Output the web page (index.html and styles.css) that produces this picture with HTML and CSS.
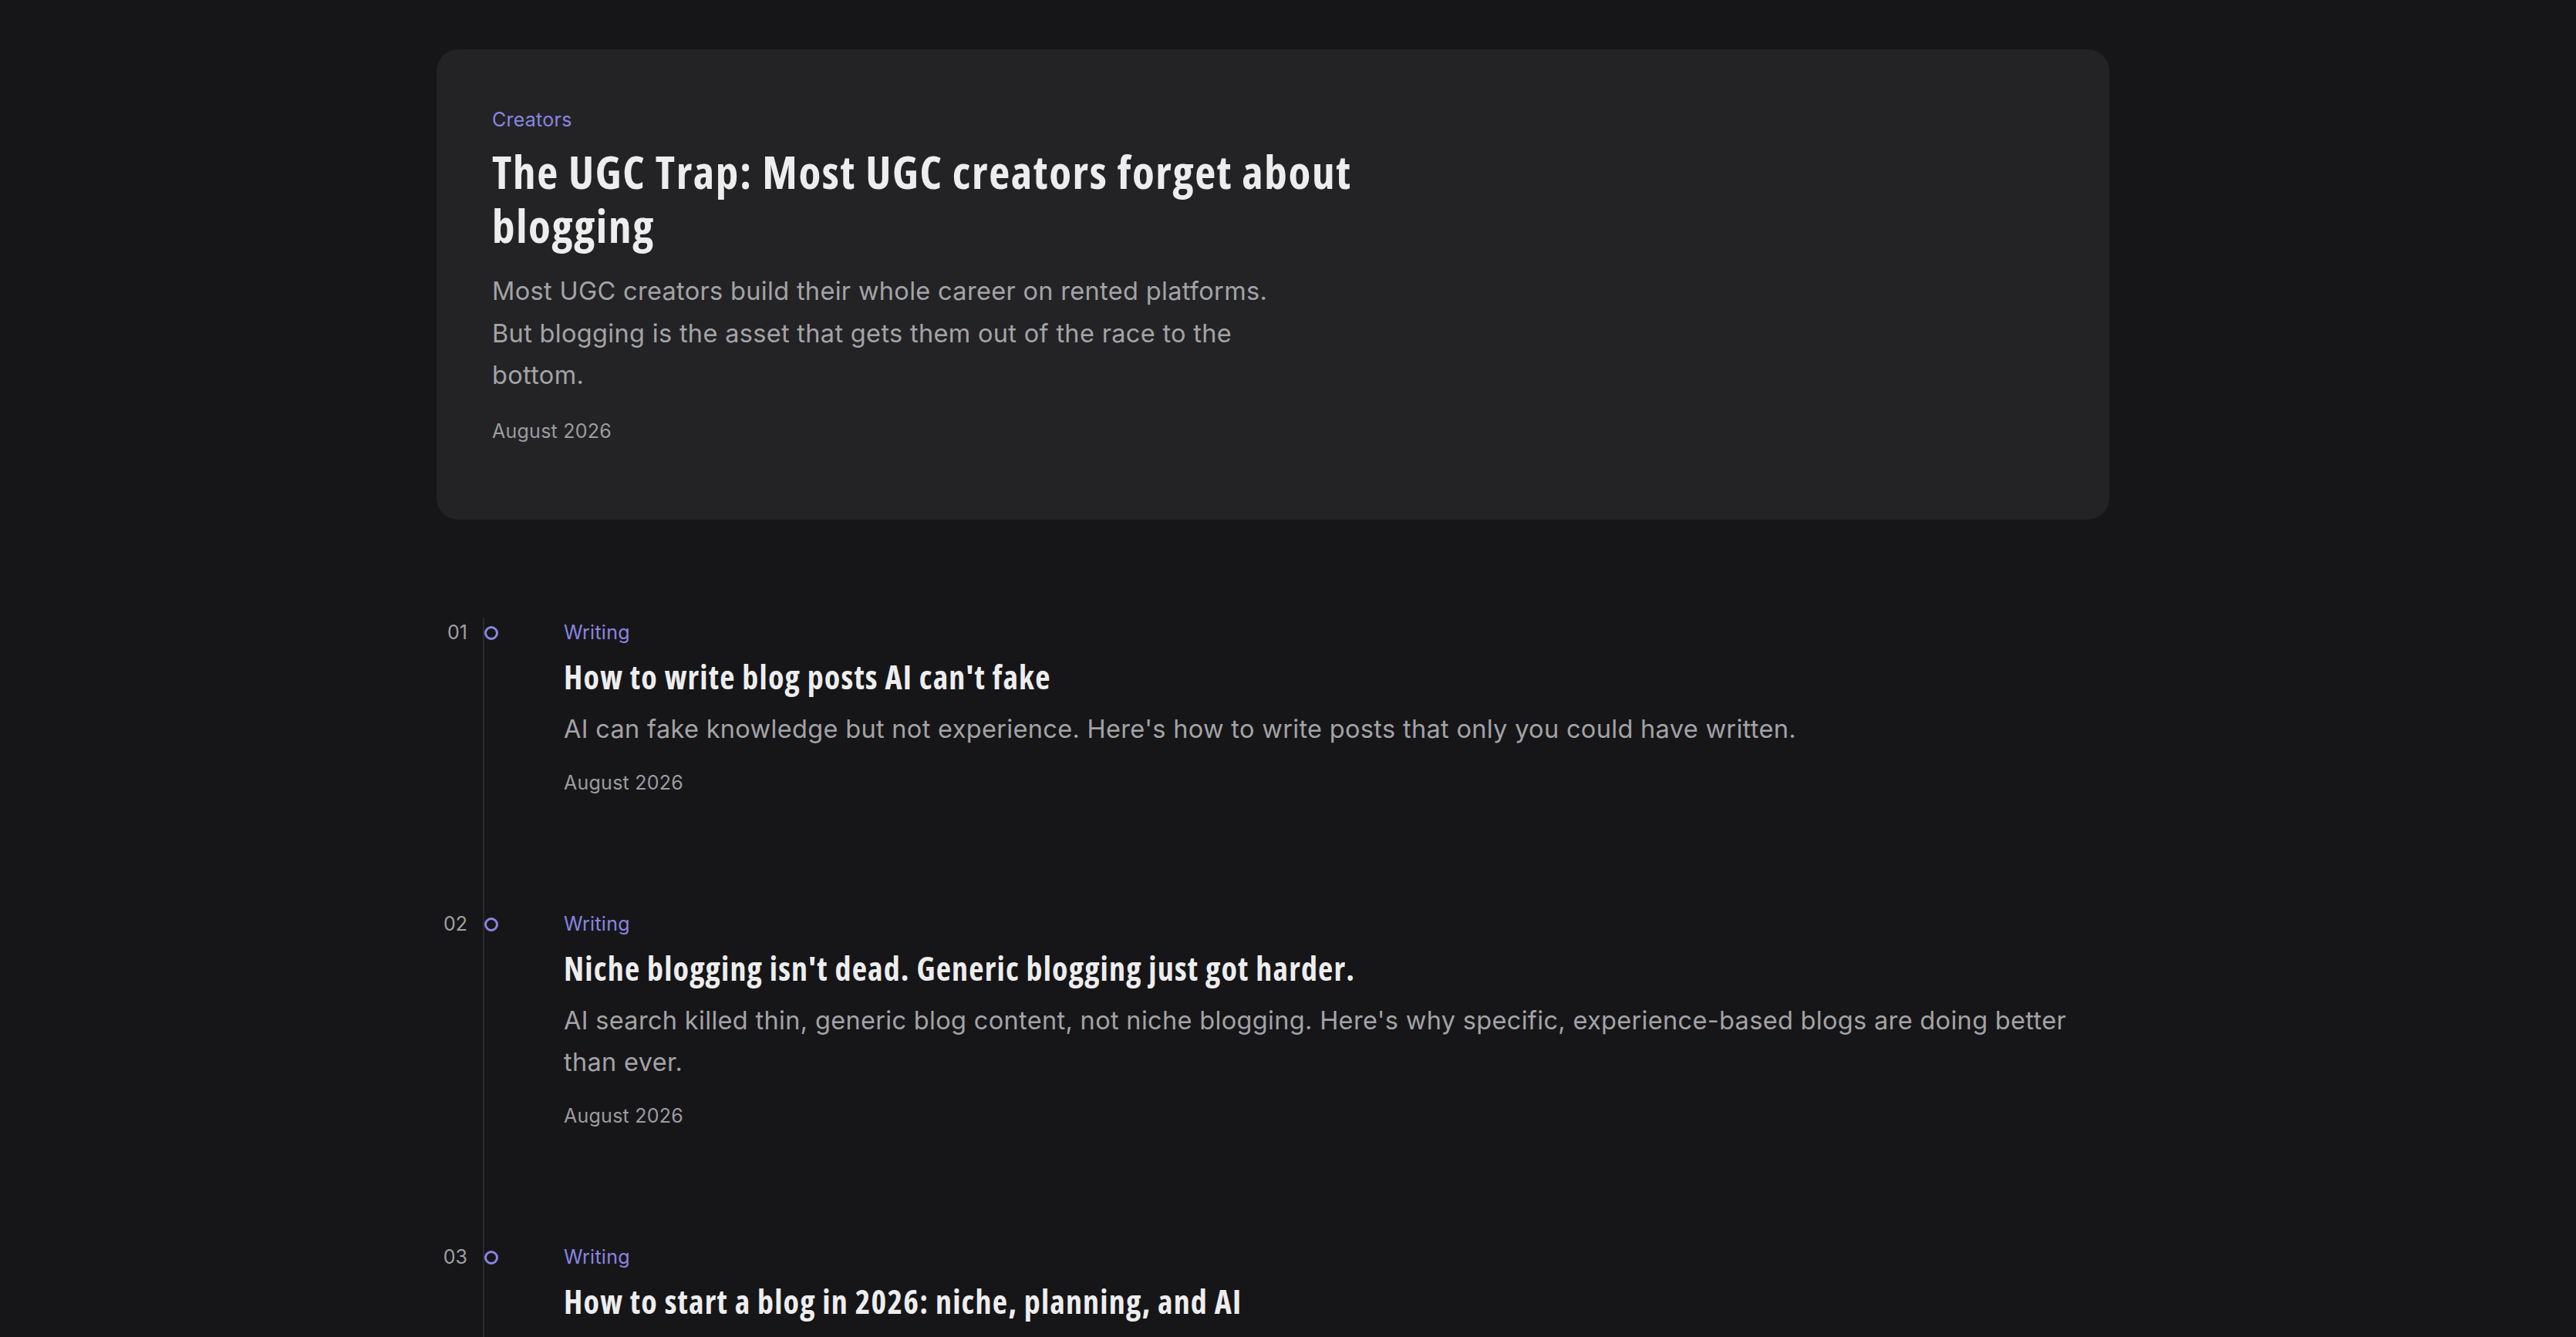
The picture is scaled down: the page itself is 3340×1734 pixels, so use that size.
FILE: index.html
```html
<!DOCTYPE html>
<html lang="en">
<head>
<meta charset="utf-8">
<title>Blog</title>
<link rel="stylesheet" href="styles.css">
</head>
<body>
<main class="page">
  <article class="feature">
    <div class="feature-tag">Creators</div>
    <h1 class="feature-title">The UGC Trap: Most UGC creators forget about blogging</h1>
    <p class="feature-excerpt">Most UGC creators build their whole career on rented platforms. But blogging is the asset that gets them out of the race to the bottom.</p>
    <div class="feature-date">August 2026</div>
  </article>

  <ol class="posts">
    <li class="post">
      <div class="post-num">01</div>
      <div class="post-rail"><span class="post-dot"></span></div>
      <div class="post-body">
        <div class="post-tag">Writing</div>
        <h2 class="post-title">How to write blog posts AI can't fake</h2>
        <p class="post-excerpt">AI can fake knowledge but not experience. Here's how to write posts that only you could have written.</p>
        <div class="post-date">August 2026</div>
      </div>
    </li>
    <li class="post">
      <div class="post-num">02</div>
      <div class="post-rail"><span class="post-dot"></span></div>
      <div class="post-body">
        <div class="post-tag">Writing</div>
        <h2 class="post-title">Niche blogging isn't dead. Generic blogging just got harder.</h2>
        <p class="post-excerpt">AI search killed thin, generic blog content, not niche blogging. Here's why specific, experience-based blogs are doing better than ever.</p>
        <div class="post-date">August 2026</div>
      </div>
    </li>
    <li class="post">
      <div class="post-num">03</div>
      <div class="post-rail"><span class="post-dot"></span></div>
      <div class="post-body">
        <div class="post-tag">Writing</div>
        <h2 class="post-title">How to start a blog in 2026: niche, planning, and AI</h2>
      </div>
    </li>
  </ol>
</main>
</body>
</html>
```

FILE: styles.css
```css
html, body {
  margin: 0;
  padding: 0;
  background: #161618;
}

body {
  font-family: "Inter", "Lato", "Liberation Sans", sans-serif;
  color: #a3a3a7;
  padding: 64px 39px 0 0;
}

.page {
  width: 2169px;
  margin: 0 auto;
}

/* Feature card */
.feature {
  background: #232325;
  border-radius: 28px;
  padding: 72px 72px 95px 72px;
}

.feature-tag {
  font-size: 25px;
  line-height: 39px;
  letter-spacing: 0.01em;
  color: #8985e0;
}

.feature-title {
  margin: 12px 0 0;
  max-width: 1200px;
  font-family: "Open Sans", "Lato", sans-serif;
  font-stretch: 87.5%;
  font-weight: 700;
  font-size: 59px;
  line-height: 70px;
  letter-spacing: 0.028em;
  color: #ededee;
}

.feature-excerpt {
  margin: 24px 0 0;
  max-width: 1045px;
  font-size: 32.5px;
  line-height: 54.5px;
  letter-spacing: 0.01em;
  color: #a3a3a7;
}

.feature-date {
  margin-top: 25px;
  font-size: 25px;
  line-height: 39px;
  letter-spacing: 0.01em;
  color: #9c9ca0;
}

/* Post list */
.posts {
  list-style: none;
  margin: 127px 0 0;
  padding: 0;
}

.post {
  display: grid;
  grid-template-columns: 60px 105px 1fr;
}

.post-num {
  padding-right: 20px;
  text-align: right;
  font-size: 25px;
  line-height: 39px;
  color: #a0a0a3;
}

.post-rail {
  border-left: 2px solid #2a2a2d;
}

.post-dot {
  display: block;
  box-sizing: border-box;
  width: 18px;
  height: 18px;
  margin-top: 11px;
  border: 3px solid #8985e0;
  border-radius: 50%;
}

.post-body {
  padding-bottom: 144px;
}

.post-tag {
  font-size: 25px;
  line-height: 39px;
  letter-spacing: 0.01em;
  color: #8985e0;
}

.post-title {
  margin: 12px 0 0;
  font-family: "Open Sans", "Lato", sans-serif;
  font-stretch: 87.5%;
  font-weight: 700;
  font-size: 42px;
  line-height: 52px;
  letter-spacing: 0.028em;
  color: #ededee;
}

.post-excerpt {
  margin: 15px 0 0;
  max-width: 1960px;
  font-size: 32.5px;
  line-height: 54px;
  letter-spacing: 0.01em;
  color: #a3a3a7;
}

.post-date {
  margin-top: 23px;
  font-size: 25px;
  line-height: 39px;
  letter-spacing: 0.01em;
  color: #9c9ca0;
}
```
